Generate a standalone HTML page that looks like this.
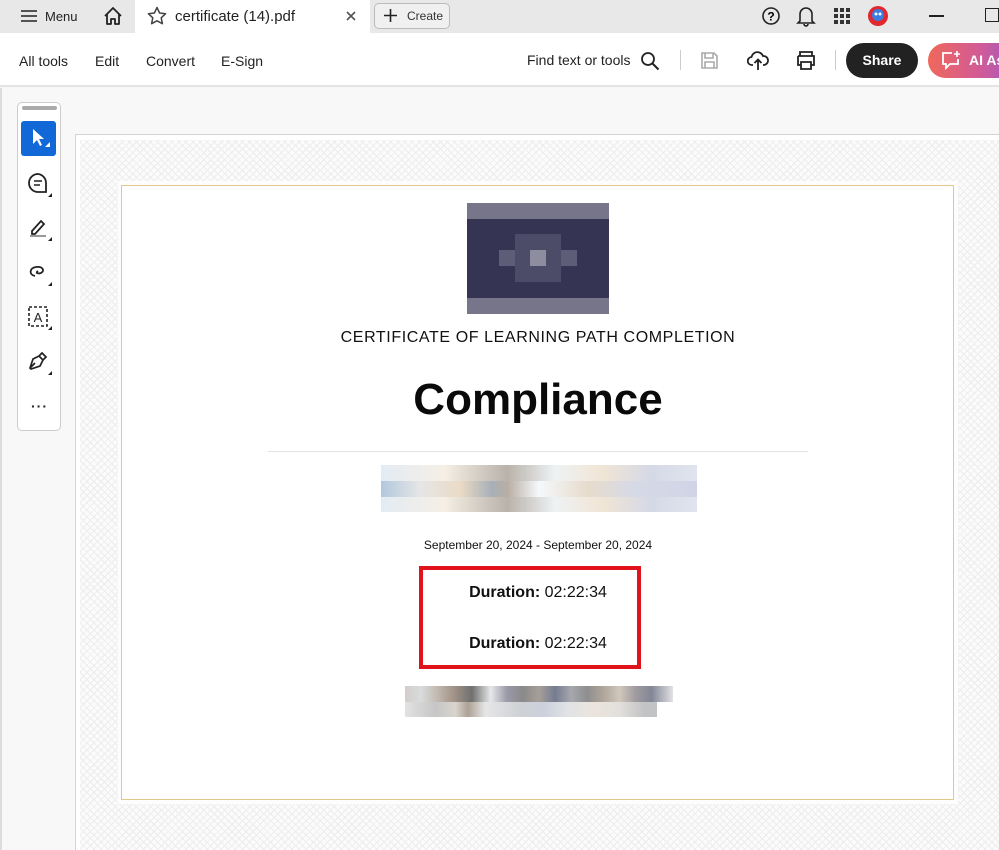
<!DOCTYPE html>
<html><head><meta charset="utf-8"><style>
*{margin:0;padding:0;box-sizing:border-box}
body{width:999px;height:850px;overflow:hidden;background:#f8f8f8;font-family:"Liberation Sans",sans-serif;position:relative;color:#222}
.abs{position:absolute}
.tabbar{left:0;top:0;width:999px;height:33px;background:#e8e8e8}
.toolbar{left:0;top:33px;width:999px;height:54px;background:#fff;border-bottom:2px solid #e4e4e4}
.t{font-size:14px;color:#222}
.guil{left:80px;top:140px;width:919px;height:710px;background:
repeating-linear-gradient(45deg,#ededed 0 1px,transparent 1px 5px),repeating-linear-gradient(-45deg,#ededed 0 1px,#fbfbfb 1px 5px)}
.white{left:118px;top:181px;width:840px;height:623px;background:#fdfdfd}
.inner{left:121px;top:185px;width:833px;height:615px;background:#fff;border:1.5px solid #e2c78a}
</style></head><body>
<div class="abs tabbar"></div>
<svg class="abs" style="left:20px;top:9px" width="18" height="14"><path d="M1 2h16M1 7h16M1 12h16" stroke="#222" stroke-width="1.6"/></svg>
<div class="abs t" style="left:45px;top:9px;font-size:13px">Menu</div>
<svg class="abs" style="left:102px;top:5px" width="22" height="22" viewBox="0 0 22 22"><path d="M3 11L11 3l8 8M5 9v10h4v-5h4v5h4V9" fill="none" stroke="#222" stroke-width="1.8" stroke-linejoin="round"/></svg>
<div class="abs" style="left:135px;top:0;width:235px;height:34px;background:#fff"></div>
<svg class="abs" style="left:147px;top:6px" width="20" height="20" viewBox="0 0 20 20"><path d="M10 1.5l2.6 5.5 6 .7-4.4 4.1 1.2 5.9L10 14.8l-5.4 2.9 1.2-5.9L1.4 7.7l6-.7z" fill="none" stroke="#444" stroke-width="1.5" stroke-linejoin="round"/></svg>
<div class="abs t" style="left:175px;top:8px;font-size:15px">certificate (14).pdf</div>
<svg class="abs" style="left:346px;top:11px" width="10" height="10"><path d="M1 1l8 8M9 1l-8 8" stroke="#555" stroke-width="1.6"/></svg>
<div class="abs" style="left:374px;top:3px;width:76px;height:26px;border:1px solid #bbb;border-radius:5px;background:#f0f0f0"></div>
<svg class="abs" style="left:384px;top:9px" width="13" height="13"><path d="M6.5 0v13M0 6.5h13" stroke="#222" stroke-width="1.6"/></svg>
<div class="abs t" style="left:407px;top:9px;font-size:12px;color:#333">Create</div>
<svg class="abs" style="left:761px;top:6px" width="20" height="20"><circle cx="10" cy="10" r="8" fill="none" stroke="#222" stroke-width="1.6"/><text x="10" y="14.5" font-size="12" font-weight="bold" text-anchor="middle" font-family="Liberation Sans">?</text></svg>
<svg class="abs" style="left:796px;top:5px" width="20" height="22"><path d="M4 16V9a6 6 0 0112 0v7l2 2H2zM8 19a2 2 0 004 0" fill="none" stroke="#222" stroke-width="1.6"/></svg>
<svg class="abs" style="left:834px;top:8px" width="16" height="16"><g fill="#333"><rect x="0" y="0" width="4" height="4"/><rect x="6" y="0" width="4" height="4"/><rect x="12" y="0" width="4" height="4"/><rect x="0" y="6" width="4" height="4"/><rect x="6" y="6" width="4" height="4"/><rect x="12" y="6" width="4" height="4"/><rect x="0" y="12" width="4" height="4"/><rect x="6" y="12" width="4" height="4"/><rect x="12" y="12" width="4" height="4"/></g></svg>
<svg class="abs" style="left:868px;top:6px" width="20" height="20"><circle cx="10" cy="10" r="10" fill="#e0282e"/><circle cx="10" cy="9" r="6" fill="#3a7de0"/><circle cx="8" cy="8" r="1.5" fill="#fff"/><circle cx="12" cy="8" r="1.5" fill="#fff"/></svg>
<div class="abs" style="left:929px;top:15px;width:15px;height:1.5px;background:#222"></div>
<div class="abs" style="left:985px;top:8px;width:14px;height:14px;border:1.5px solid #222"></div>

<div class="abs toolbar"></div>
<div class="abs t" style="left:19px;top:53px">All tools</div>
<div class="abs t" style="left:95px;top:53px">Edit</div>
<div class="abs t" style="left:146px;top:53px">Convert</div>
<div class="abs t" style="left:221px;top:53px">E-Sign</div>
<div class="abs t" style="left:527px;top:52px">Find text or tools</div>
<svg class="abs" style="left:640px;top:51px" width="20" height="20"><circle cx="8" cy="8" r="6" fill="none" stroke="#222" stroke-width="1.8"/><path d="M12.5 12.5l6 6" stroke="#222" stroke-width="2"/></svg>
<div class="abs" style="left:680px;top:50px;width:1px;height:20px;background:#ccc"></div>
<svg class="abs" style="left:700px;top:51px" width="19" height="19"><path d="M2 2h12l3 3v12H2z M5 2v5h8V2 M5 17v-6h9v6" fill="none" stroke="#aaa" stroke-width="1.6"/></svg>
<svg class="abs" style="left:747px;top:49px" width="22" height="22"><path d="M6 16H5a4 4 0 01-.5-8 6 6 0 0111.5-1 4.5 4.5 0 011 9h-1M11 21v-10M7.5 14l3.5-3.5 3.5 3.5" fill="none" stroke="#222" stroke-width="1.8"/></svg>
<svg class="abs" style="left:795px;top:50px" width="22" height="20"><path d="M5 6V2h12v4M3 6h16v9h-3M6 15H3V6M6 12h10v7H6z" fill="none" stroke="#222" stroke-width="1.8"/></svg>
<div class="abs" style="left:835px;top:50px;width:1px;height:20px;background:#ccc"></div>
<div class="abs" style="left:846px;top:43px;width:72px;height:35px;background:#222;border-radius:18px;color:#fff;font-weight:bold;font-size:14px;text-align:center;line-height:35px">Share</div>
<div class="abs" style="left:928px;top:43px;width:90px;height:35px;border-radius:18px;background:linear-gradient(90deg,#f0685a,#d05a9a 60%,#9a5ac0);color:#fff;font-weight:bold;font-size:14px;line-height:35px;padding-left:41px">AI As</div>
<svg class="abs" style="left:940px;top:50px" width="22" height="20"><path d="M12 3H3v11h3v4l4-4h8V9" fill="none" stroke="#fff" stroke-width="1.8"/><path d="M17 1v6M14 4h6" stroke="#fff" stroke-width="1.6"/></svg>

<div class="abs" style="left:0;top:88px;width:2px;height:762px;background:#ddd"></div>
<div class="abs" style="left:17px;top:102px;width:44px;height:329px;background:#fff;border:1px solid #ccc;border-radius:5px"></div>
<div class="abs" style="left:22px;top:106px;width:35px;height:4px;background:#aaa;border-radius:2px"></div>
<div class="abs" style="left:21px;top:121px;width:35px;height:35px;background:#1268d6;border-radius:3px"></div>
<svg class="abs" style="left:31px;top:128px" width="20" height="22"><path d="M2 1v15l4-4 3 6 2-1-3-6h5z" fill="#fff"/><path d="M19 19v-5l-5 5z" fill="#fff"/></svg>
<svg class="abs" style="left:27px;top:172px" width="26" height="26"><path d="M11 2a9 9 0 00-9 9 9 9 0 009 9h8v-9a9 9 0 00-8-9z" fill="none" stroke="#222" stroke-width="1.8"/><path d="M7 9h8M7 13h6" stroke="#222" stroke-width="1.6"/><path d="M25 21v4h-4z" fill="#222"/></svg>
<svg class="abs" style="left:27px;top:216px" width="26" height="26"><path d="M5 15l9-10 3 3-9 10H5z" fill="none" stroke="#222" stroke-width="1.8"/><path d="M3 19h16v2H3z" fill="#999"/><path d="M25 21v4h-4z" fill="#222"/></svg>
<svg class="abs" style="left:27px;top:261px" width="26" height="26"><path d="M8 15c-6-1-6-8 1-9 7-1 9 4 5 6-3 1-6 0-3-2" fill="none" stroke="#222" stroke-width="1.8"/><path d="M25 21v4h-4z" fill="#222"/></svg>
<svg class="abs" style="left:27px;top:305px" width="26" height="26"><rect x="2" y="2" width="18" height="19" fill="none" stroke="#222" stroke-width="1.6" stroke-dasharray="3 2"/><text x="11" y="17" font-size="13" text-anchor="middle" font-family="Liberation Sans" fill="#222">A</text><path d="M25 21v4h-4z" fill="#222"/></svg>
<svg class="abs" style="left:27px;top:350px" width="26" height="26"><path d="M3 18l3-9 6-3 4 4-3 6-9 3zM12 6l3-3 4 4-3 3M3 18l5-5" fill="none" stroke="#222" stroke-width="1.7"/><path d="M25 21v4h-4z" fill="#222"/></svg>
<div class="abs" style="left:31px;top:398px;font-size:14px;letter-spacing:1px;font-weight:bold">···</div>

<div class="abs" style="left:75px;top:134px;width:924px;height:716px;background:#fff;border-top:1px solid #d4d4d4;border-left:1px solid #d4d4d4"></div>
<div class="abs guil"></div>
<div class="abs white"></div>
<div class="abs inner"></div>
<div class="abs" style="left:467px;top:203px;width:142px;height:111px;background:#353452"></div>
<div class="abs" style="left:467px;top:203px;width:142px;height:16px;background:#76758a"></div>
<div class="abs" style="left:467px;top:298px;width:142px;height:16px;background:#76758a"></div>
<div class="abs" style="left:499px;top:250px;width:78px;height:16px;background:#5e5d78"></div>
<div class="abs" style="left:515px;top:234px;width:46px;height:48px;background:#4c4b68"></div>
<div class="abs" style="left:530px;top:250px;width:16px;height:16px;background:#8e8da0"></div>
<div class="abs" style="left:0;top:329px;width:1076px;text-align:center;font-size:16px;letter-spacing:0.6px;color:#111">CERTIFICATE OF LEARNING PATH COMPLETION</div>
<div class="abs" style="left:0;top:375px;width:1076px;text-align:center;font-size:44px;font-weight:bold;color:#0a0a0a">Compliance</div>
<div class="abs" style="left:268px;top:451px;width:540px;height:1px;background:#e2e2e2"></div>
<div class="abs" style="left:381px;top:465px;width:316px;height:47px;background:linear-gradient(90deg,#e3ebf3,#f5efe6 20%,#b9b2aa 40%,#eef2f4 55%,#f1e5d5 70%,#d5d9e6 85%,#e0e4ee)"></div>
<div class="abs" style="left:381px;top:481px;width:316px;height:16px;background:linear-gradient(90deg,#b2c8dc,#e6e6e6,#eadbc5 25%,#a7b0b8 35%,#b9aea4 40%,#f5f8fc 50%,#e7dccc 65%,#d6dae6 80%,#d0d4e6)"></div>
<div class="abs" style="left:0;top:538px;width:1076px;text-align:center;font-size:12px;color:#111">September 20, 2024 - September 20, 2024</div>
<div class="abs" style="left:419px;top:566px;width:222px;height:103px;border:4px solid #e0121a"></div>
<div class="abs" style="left:0;top:584px;width:1076px;text-align:center;font-size:16px;color:#111"><b>Duration:</b> 02:22:34</div>
<div class="abs" style="left:0;top:635px;width:1076px;text-align:center;font-size:16px;color:#111"><b>Duration:</b> 02:22:34</div>
<div class="abs" style="left:405px;top:686px;width:268px;height:16px;background:linear-gradient(90deg,#d2cdc9,#d9dcdd 6%,#c2b9b1 12%,#a39488 18%,#707070 25%,#e6e8ea 32%,#9b9aa8 38%,#8a8a8a 44%,#a69f99 50%,#757c91 56%,#a6a8ad 62%,#8e8e8e 68%,#b0a59b 74%,#d0c8bc 80%,#a09ba0 86%,#828696 92%,#e2e2e4)"></div>
<div class="abs" style="left:405px;top:702px;width:252px;height:15px;background:linear-gradient(90deg,#e2e2e2,#c6c6c6 12%,#d8d4ce 20%,#aea196 25%,#e6e6e6 32%,#cfd2d6 45%,#ccd0dc 55%,#e1e3e6 65%,#ece4dc 75%,#e2e0dc 85%,#c2c3c4 95%)"></div>
</body></html>
